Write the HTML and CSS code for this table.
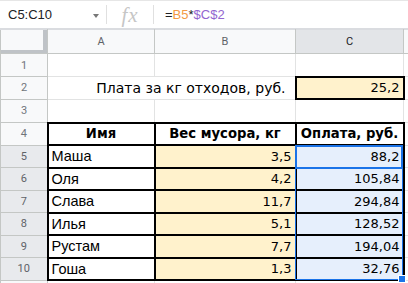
FILE: index.html
```html
<!DOCTYPE html>
<html>
<head>
<meta charset="utf-8">
<link rel="stylesheet" href="styles.css">
</head>
<body>
<div class="app">
  <div class="formula-bar">
    <div class="namebox"><span>C5:C10</span><span class="caret"></span></div>
    <div class="sep"></div>
    <div class="fx">fx</div>
    <div class="sep"></div>
    <div class="formula">=<span class="ref1">B5</span>*<span class="ref2">$C$2</span></div>
  </div>
  <table class="sheet">
    <colgroup>
      <col class="c-rh"><col class="c-a"><col class="c-b"><col class="c-c"><col class="c-d">
    </colgroup>
    <tr class="hdr">
      <th class="corner"></th><th>A</th><th>B</th><th class="sel">C</th><th></th>
    </tr>
    <tr><th class="rh">1</th><td></td><td></td><td></td><td></td></tr>
    <tr><th class="rh">2</th><td colspan="2" class="label">Плата за кг отходов, руб.</td><td class="num peach box">25,2</td><td></td></tr>
    <tr><th class="rh">3</th><td></td><td></td><td></td><td></td></tr>
    <tr><th class="rh">4</th><td class="head tb">Имя</td><td class="head tb">Вес мусора, кг</td><td class="head tb">Оплата, руб.</td><td></td></tr>
    <tr><th class="rh rsel">5</th><td class="name tb">Маша</td><td class="num peach tb">3,5</td><td class="num blue tb anchor">88,2<div class="range"></div><div class="active"></div></td><td></td></tr>
    <tr><th class="rh rsel">6</th><td class="name tb">Оля</td><td class="num peach tb">4,2</td><td class="num blue tb">105,84</td><td></td></tr>
    <tr><th class="rh rsel">7</th><td class="name tb">Слава</td><td class="num peach tb">11,7</td><td class="num blue tb">294,84</td><td></td></tr>
    <tr><th class="rh rsel">8</th><td class="name tb">Илья</td><td class="num peach tb">5,1</td><td class="num blue tb">128,52</td><td></td></tr>
    <tr><th class="rh rsel">9</th><td class="name tb">Рустам</td><td class="num peach tb">7,7</td><td class="num blue tb">194,04</td><td></td></tr>
    <tr><th class="rh rsel">10</th><td class="name tb">Гоша</td><td class="num peach tb">1,3</td><td class="num blue tb">32,76</td><td></td></tr>
    <tr><th class="rh"></th><td></td><td></td><td></td><td></td></tr>
  </table>
</div>
</body>
</html>
```

FILE: styles.css
```css
html, body {
  margin: 0;
  padding: 0;
  background: #fff;
}
.app {
  width: 408px;
  height: 283px;
  overflow: hidden;
  position: relative;
}
.formula-bar {
  display: flex;
  align-items: center;
  height: 27px;
  border-top: 1px solid #e6e6e6;
  border-bottom: 1px solid #dadce0;
  font-family: "Liberation Sans", Arial, sans-serif;
  font-size: 13px;
  color: #202124;
}
.namebox {
  width: 106px;
  box-sizing: border-box;
  padding-left: 8px;
  padding-right: 7px;
  display: flex;
  align-items: center;
  justify-content: space-between;
}
.caret {
  width: 0;
  height: 0;
  border-left: 3px solid transparent;
  border-right: 3px solid transparent;
  border-top: 4px solid #777;
  margin-top: 2px;
}
.sep {
  width: 1px;
  height: 19px;
  background: #e0e0e0;
}
.fx {
  width: 46px;
  text-align: center;
  font-family: "Liberation Serif", serif;
  font-style: italic;
  font-size: 21px;
  color: #c6c6c6;
  line-height: 20px;
  letter-spacing: 1px;
}
.formula {
  padding-left: 11px;
}
.ref1 { color: #f39a45; }
.ref2 { color: #9265d0; }

.sheet {
  border-collapse: collapse;
  table-layout: fixed;
  width: 440px;
}
.c-rh { width: 47px; }
.c-a { width: 107px; }
.c-b { width: 141px; }
.c-c { width: 108px; }
.c-d { width: 37px; }

.sheet th, .sheet td {
  padding: 0;
  border: 1px solid #e2e3e3;
  height: 21.5px;
  overflow: hidden;
  white-space: nowrap;
}
.hdr th {
  height: 23px;
  background: #f8f9fa;
  border-color: #c4c7c5;
  border-top-color: #dadce0;
  font-family: Roboto, "Liberation Sans", sans-serif;
  font-weight: normal;
  font-size: 11px;
  color: #5f6368;
}
.hdr th.sel {
  background: #e3e5e8;
  color: #202124;
}
.corner {
  box-shadow: inset -4px -3px 0 #bfc3c7;
}
.rh {
  background: #f8f9fa;
  border-color: #c4c7c5 !important;
  font-family: Roboto, "Liberation Sans", sans-serif;
  font-weight: normal;
  font-size: 11px;
  color: #70757a;
}
.rh.rsel {
  background: #e8eaed;
  color: #5f6368;
}
.label {
  text-align: right;
  padding-right: 9px !important;
  font-family: "DejaVu Sans", Verdana, sans-serif;
  font-size: 14px;
  color: #000;
}
.num {
  text-align: right;
  padding-right: 3px !important;
  font-family: "DejaVu Sans", Verdana, sans-serif;
  font-size: 13px;
  color: #000;
}
.name {
  padding-left: 3px !important;
  font-family: "Liberation Sans", Arial, sans-serif;
  font-size: 14.5px;
  color: #000;
}
.head {
  text-align: center;
  font-family: "DejaVu Sans", Verdana, sans-serif;
  font-weight: bold;
  font-size: 13.2px;
  color: #000;
}
.peach { background: #fff2cc; }
.blue { background: #e6effc; }
.sheet td.tb, .sheet td.box {
  border: 2px solid #000;
  height: 20.5px;
}
.anchor {
  position: relative;
  overflow: visible !important;
}
.range {
  position: absolute;
  left: -2px;
  top: -1px;
  width: calc(100% + 2px);
  height: 135px;
  border: 1px solid #1a73e8;
  box-sizing: border-box;
  pointer-events: none;
}
.range::after {
  content: "";
  position: absolute;
  right: -4px;
  bottom: -4px;
  width: 6px;
  height: 6px;
  background: #1a73e8;
  border: 1px solid #fff;
}
.active {
  position: absolute;
  left: -2px;
  top: -1px;
  width: calc(100% + 2px);
  height: 24px;
  border: 2px solid #1a73e8;
  box-sizing: border-box;
}
```
